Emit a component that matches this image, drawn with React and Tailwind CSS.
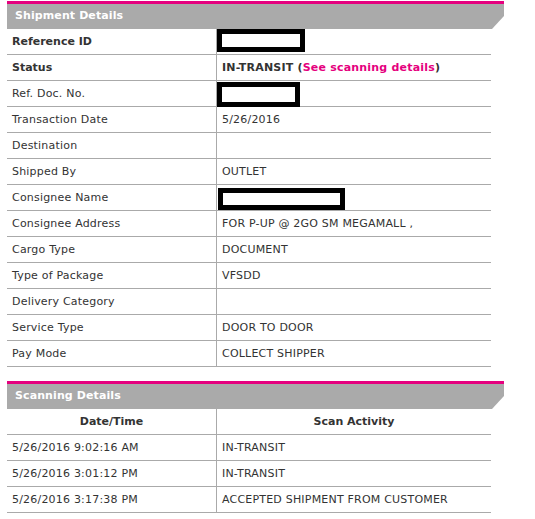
import React from "react";

const rows = [
  { label: "Reference ID", bold: true, redact: "w-[88px] h-[23px] top-0" },
  { label: "Status", bold: true, status: true },
  { label: "Ref. Doc. No.", redact: "w-[83px] h-[25px] top-[1px] -left-px" },
  { label: "Transaction Date", value: "5/26/2016" },
  { label: "Destination", value: "" },
  { label: "Shipped By", value: "OUTLET" },
  { label: "Consignee Name", redact: "w-[127px] h-[22px] top-[3px] left-px" },
  { label: "Consignee Address", value: "FOR P-UP @ 2GO SM MEGAMALL ," },
  { label: "Cargo Type", value: "DOCUMENT" },
  { label: "Type of Package", value: "VFSDD" },
  { label: "Delivery Category", value: "" },
  { label: "Service Type", value: "DOOR TO DOOR" },
  { label: "Pay Mode", value: "COLLECT SHIPPER" },
];

const scans = [
  ["5/26/2016 9:02:16 AM", "IN-TRANSIT"],
  ["5/26/2016 3:01:12 PM", "IN-TRANSIT"],
  ["5/26/2016 3:17:38 PM", "ACCEPTED SHIPMENT FROM CUSTOMER"],
];

function Header({ title }) {
  return (
    <div className="w-[497px]">
      <div className="h-[3px] bg-[#e5007e]" />
      <div className="h-[25px] bg-[#aaaaaa] flex items-center pl-[8px] text-white font-bold text-[11px] tracking-[0.1px] [clip-path:polygon(0_0,100%_0,100%_12px,485px_100%,0_100%)]">
        {title}
      </div>
    </div>
  );
}

export default function App() {
  return (
    <div
      className="bg-white w-[535px] h-[519px] pt-px pl-[7px] text-[#333333] text-[11px]"
      style={{ fontFamily: '"DejaVu Sans", Verdana, sans-serif' }}
    >
      <Header title="Shipment Details" />
      <div className="w-[484px]">
        {rows.map((r, i) => (
          <div key={i} className="flex h-[26px] border-b border-[#aaaaaa]">
            <div
              className={`w-[210px] shrink-0 border-r border-[#aaaaaa] pl-[5px] pt-px flex items-center ${
                r.bold ? "font-bold" : "tracking-[0.2px]"
              }`}
            >
              {r.label}
            </div>
            <div className="relative flex-1 pl-[5px] pt-px flex items-center tracking-[0.2px]">
              {r.redact ? (
                <div className={`absolute left-0 border-[5px] border-black bg-white ${r.redact}`} />
              ) : r.status ? (
                <span className="font-bold">
                  IN-TRANSIT (<span className="text-[#e5007e]">See scanning details</span>)
                </span>
              ) : (
                r.value
              )}
            </div>
          </div>
        ))}
      </div>

      <div className="mt-[14px]">
        <Header title="Scanning Details" />
        <div className="w-[484px]">
          <div className="flex h-[26px] border-b border-[#aaaaaa] font-bold">
            <div className="w-[210px] shrink-0 border-r border-[#aaaaaa] pt-px flex items-center justify-center">
              Date/Time
            </div>
            <div className="flex-1 pt-px flex items-center justify-center">Scan Activity</div>
          </div>
          {scans.map((s, i) => (
            <div key={i} className="flex h-[26px] border-b border-[#aaaaaa] tracking-[0.2px]">
              <div className="w-[210px] shrink-0 border-r border-[#aaaaaa] pl-[5px] pt-px flex items-center">
                {s[0]}
              </div>
              <div className="flex-1 pl-[5px] pt-px flex items-center">{s[1]}</div>
            </div>
          ))}
        </div>
      </div>
    </div>
  );
}
